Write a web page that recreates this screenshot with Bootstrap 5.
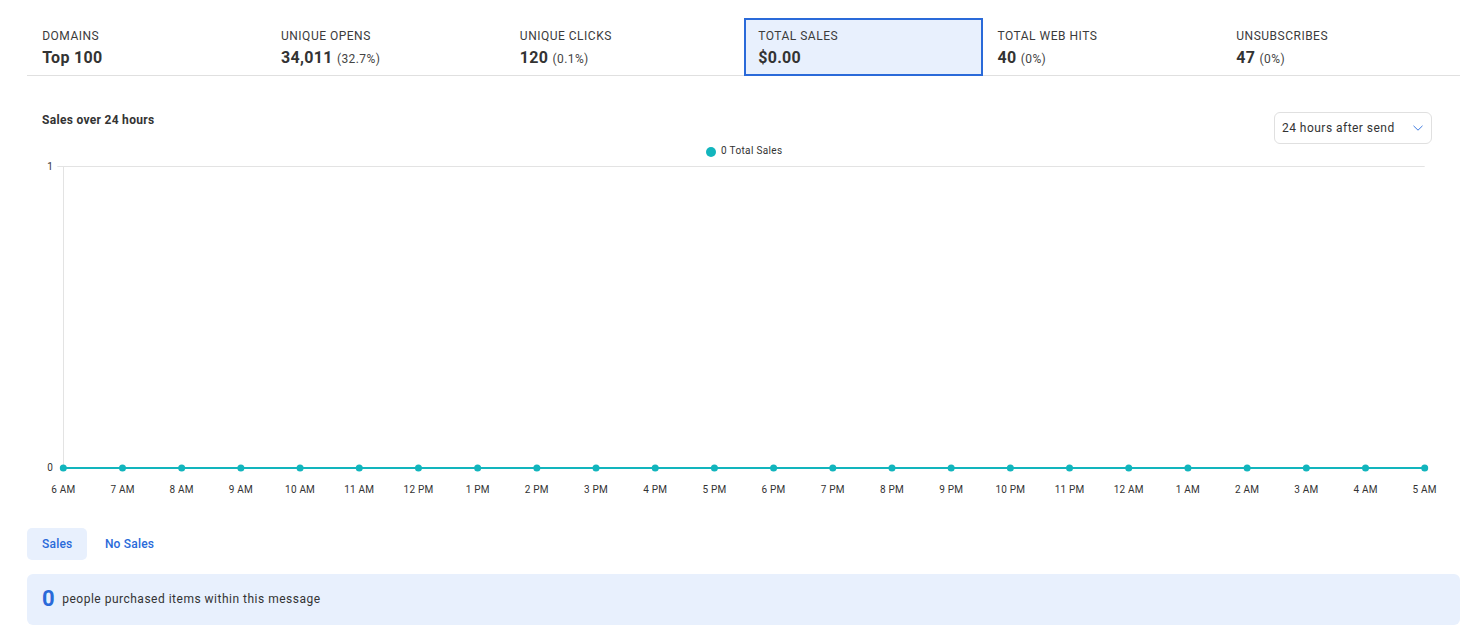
<!DOCTYPE html>
<html lang="en">

<head>
    <meta charset="UTF-8">
    <meta name="viewport" content="width=device-width, initial-scale=1.0">
    <title>Sales over 24 hours</title>
    <link href="https://cdn.jsdelivr.net/npm/bootstrap@5.3.0/dist/css/bootstrap.min.css" rel="stylesheet">
    <style>
        body {
            font-family: Roboto, "Liberation Sans", sans-serif;
            color: #333;
            background: #fff;
        }

        .report-wrap {
            margin: 0 8px 0 27px;
            padding-top: 18px;
        }

        .stat-row {
            border-bottom: 1px solid #e0e0e0;
            height: 58px;
        }

        .stat-cell {
            flex: 0 0 238.83px;
        }

        .stat-cell:first-child {
            margin-left: .2px;
        }

        .stat-tile {
            height: 58px;
            padding: 9px 13px 0 15px;
            border: 2px solid transparent;
            border-width: 2px 0;
        }

        .stat-tile.is-active {
            background: #e8f0fd;
            border: 2px solid #2a6ad9;
            padding-left: 12.5px;
        }

        .stat-label {
            font-size: 12px;
            line-height: 15px;
            letter-spacing: .5px;
            color: #3b3b3b;
        }

        .stat-value {
            font-size: 16px;
            line-height: 20px;
            margin-top: 4px;
            font-weight: 700;
            letter-spacing: .3px;
        }

        .stat-pct {
            font-size: 12px;
            font-weight: 400;
            letter-spacing: .4px;
            color: #444;
        }

        .chart-head {
            padding-top: 36px;
            height: 68px;
        }

        .chart-title {
            font-size: 12px;
            font-weight: 700;
            line-height: 15px;
            letter-spacing: .3px;
            padding: 1px 0 0 15px;
        }

        .range-select {
            width: 158px;
            height: 32px;
            margin-right: 28px;
            padding: 0 7px;
            font-family: Roboto, "Liberation Sans", sans-serif;
            font-size: 12px;
            letter-spacing: .47px;
            color: #333;
            border: 1px solid #e0e0e0;
            border-radius: 6px;
            background-image: url("data:image/svg+xml,%3csvg xmlns='http://www.w3.org/2000/svg' viewBox='0 0 10 6'%3e%3cpath fill='none' stroke='%233f7bdf' d='M.5.8 5 5.2 9.5.8'/%3e%3c/svg%3e");
            background-size: 10px 6px;
            background-position: right 8px center;
        }

        .sales-chart {
            display: block;
            width: 1433px;
            height: 360px;
        }

        .sales-chart text {
            font-family: Roboto, "Liberation Sans", sans-serif;
            font-size: 10px;
            letter-spacing: .2px;
            fill: #333;
        }

        .sales-chart .legend-text {
            letter-spacing: .35px;
        }

        .sale-pills {
            margin-top: 24px;
            gap: 2.5px;
        }

        .sale-pills .nav-link {
            height: 32px;
            padding: 0 15px;
            font-size: 12px;
            line-height: 32px;
            font-weight: 500;
            letter-spacing: .2px;
            color: #2a6ad9;
            border-radius: 5px;
        }

        .sale-pills .nav-link.active {
            background: #e8f0fd;
            color: #2a6ad9;
        }

        .purchase-note {
            margin-top: 14px;
            height: 51px;
            padding: 0 15px 2px;
            background: #e8f0fd;
            border-radius: 6px;
            font-size: 12px;
            letter-spacing: .5px;
        }

        .purchase-count {
            font-size: 22px;
            font-weight: 700;
            color: #2a6ad9;
            letter-spacing: 0;
            margin-right: 7.6px;
        }
    </style>
</head>

<body>
    <div class="report-wrap">
        <div class="d-flex stat-row">
            <div class="stat-cell"><div class="stat-tile">
                <div class="stat-label">DOMAINS</div>
                <div class="stat-value">Top 100</div>
            </div></div>
            <div class="stat-cell"><div class="stat-tile">
                <div class="stat-label">UNIQUE OPENS</div>
                <div class="stat-value">34,011 <span class="stat-pct">(32.7%)</span></div>
            </div></div>
            <div class="stat-cell"><div class="stat-tile">
                <div class="stat-label">UNIQUE CLICKS</div>
                <div class="stat-value">120 <span class="stat-pct">(0.1%)</span></div>
            </div></div>
            <div class="stat-cell"><div class="stat-tile is-active">
                <div class="stat-label">TOTAL SALES</div>
                <div class="stat-value">$0.00</div>
            </div></div>
            <div class="stat-cell"><div class="stat-tile">
                <div class="stat-label">TOTAL WEB HITS</div>
                <div class="stat-value">40 <span class="stat-pct">(0%)</span></div>
            </div></div>
            <div class="stat-cell"><div class="stat-tile">
                <div class="stat-label">UNSUBSCRIBES</div>
                <div class="stat-value">47 <span class="stat-pct">(0%)</span></div>
            </div></div>
        </div>

        <div class="d-flex justify-content-between align-items-start chart-head">
            <div class="chart-title">Sales over 24 hours</div>
            <select class="form-select range-select">
                <option>24 hours after send</option>
                <option>7 days after send</option>
            </select>
        </div>

        <svg id="salesChart" class="sales-chart" viewBox="0 0 1433 360"></svg>

        <ul class="nav nav-pills sale-pills">
            <li class="nav-item"><a class="nav-link active" href="#">Sales</a></li>
            <li class="nav-item"><a class="nav-link" href="#">No Sales</a></li>
        </ul>

        <div class="d-flex align-items-center purchase-note">
            <span class="purchase-count">0</span>
            <span>people purchased items within this message</span>
        </div>
    </div>

    <script src="https://cdn.jsdelivr.net/npm/bootstrap@5.3.0/dist/js/bootstrap.bundle.min.js"></script>
    <script>
        const hours = ['6 AM', '7 AM', '8 AM', '9 AM', '10 AM', '11 AM', '12 PM', '1 PM', '2 PM', '3 PM', '4 PM', '5 PM',
            '6 PM', '7 PM', '8 PM', '9 PM', '10 PM', '11 PM', '12 AM', '1 AM', '2 AM', '3 AM', '4 AM', '5 AM'];
        const left = 36.3, right = 1397.7, top1 = 22.5, base = 324;
        const step = (right - left) / (hours.length - 1);

        let svg = `
            <circle cx="684" cy="8" r="5" fill="#12b5bd"/>
            <text class="legend-text" x="694" y="10">0 Total Sales</text>
            <line x1="${left - 6}" y1="${top1}" x2="${right}" y2="${top1}" stroke="#e3e3e3"/>
            <line x1="36.5" y1="${top1}" x2="36.5" y2="${base}" stroke="#e3e3e3"/>
            <text x="26" y="${top1 + 3.5}" text-anchor="end">1</text>
            <text x="26" y="${base + 3}" text-anchor="end">0</text>
            <line x1="${left}" y1="${base}" x2="${right}" y2="${base}" stroke="#12b5bd" stroke-width="2"/>`;

        hours.forEach((h, i) => {
            const x = left + step * i;
            svg += `<circle cx="${x}" cy="${base}" r="3.5" fill="#12b5bd"/>`;
            svg += `<text x="${x}" y="${base + 24.5}" text-anchor="middle">${h}</text>`;
        });

        document.getElementById('salesChart').innerHTML = svg;
    </script>
</body>

</html>
